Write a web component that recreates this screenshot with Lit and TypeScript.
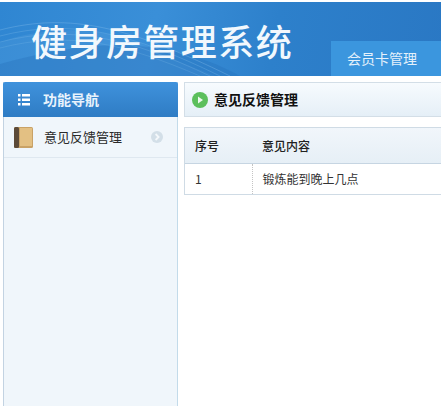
import { LitElement, html, css } from "lit";
import { customElement } from "lit/decorators.js";

@customElement("app-root")
export class AppRoot extends LitElement {
  static styles = css`
    :host { display: block; width: 441px; height: 406px; overflow: hidden; background: #fff;
      font-family: "Noto Sans CJK SC", "Liberation Sans", sans-serif; font-size: 13px; color: #222; }
    .header { margin-top: 2px; height: 74px; position: relative; overflow: hidden;
      background: linear-gradient(100deg, #2f86d2 0%, #3a8fd8 35%, #2d80cb 62%, #2a78c4 100%);
      display: flex; justify-content: space-between; align-items: flex-end; }
    .waves { position: absolute; left: 0; top: 0; width: 441px; height: 74px; }
    .title { position: relative; margin: 0 0 7px 31px; color: #f2f8fd; font-size: 36px; line-height: 58px;
      letter-spacing: 1.45px; font-weight: 500; white-space: nowrap; }
    .tab { position: relative; width: 110px; height: 35px; box-sizing: border-box; padding: 0 0 0 16px; background: #3b96de;
      color: #e4f1fb; font-size: 14px; line-height: 35px; white-space: nowrap; }
    .body { display: flex; gap: 6px; margin: 6px 0 0 3px; height: 324px; }
    .side { width: 175px; flex: none; box-sizing: border-box; background: #f0f6fb;
      border-left: 1px solid #c3d3e2; border-right: 1px solid #c3dbea; margin: 0; }
    .side-head { margin: 0 -1px; height: 35px; border-radius: 2px 2px 0 0;
      background: linear-gradient(#3f92dc, #2f7cc4); color: #e8f3fc; font-size: 14px;
      display: flex; align-items: center; gap: 13px; padding-left: 15px; font-weight: 700; }
    .side-head span, .bar span, .label { padding-bottom: 2px; }
    .item { height: 41px; box-sizing: border-box; border-bottom: 1px solid #dfe8f0; display: flex; align-items: center;
      padding-left: 10px; color: #2a2a2a; }
    .label { margin-left: 10px; flex: 1; }
    .chev { margin-right: 14px; }
    .main { flex: 1; min-width: 0; display: flex; flex-direction: column; gap: 10px; }
    .bar { height: 35px; box-sizing: border-box; border: 1px solid #d3dee7; border-right: 0;
      background: linear-gradient(#f7fbfe, #e5eff7); display: flex; align-items: center;
      gap: 6px; padding-left: 7px; font-weight: 700; font-size: 14px; color: #111; }
    table { width: 100%; border-collapse: collapse; table-layout: fixed; }
    .tbl { border: 1px solid #cfdbe5; border-right: 0; }
    th { height: 35px; padding: 0 0 0 10px; box-sizing: border-box; font-size: 12px; font-weight: 500; text-align: left; color: #222;
      background: linear-gradient(#f1f6fb, #e6eff6); border-bottom: 1px solid #c6d5e2; }
    td { height: 31px; padding: 0 0 0 10px; box-sizing: border-box; font-size: 12px; color: #333; }
    td + td { border-left: 1px dotted #c4c4c4; }
    .c1 { width: 67px; }
  `;

  render() {
    return html`
      <div class="header">
        <svg class="waves" viewBox="0 0 441 74" fill="none">
          <path d="M0 40 C60 20 120 25 180 60 L215 74 L0 74Z" fill="#5ba3e0" opacity=".28"/>
          <path d="M0 62 C80 40 160 30 240 74 L0 74Z" fill="#2470bb" opacity=".35"/>
          <path d="M0 28 C70 10 130 25 230 74" stroke="#8cc3ee" stroke-width=".6" opacity=".55"/>
          <path d="M0 34 C70 16 130 30 220 74" stroke="#8cc3ee" stroke-width=".6" opacity=".45"/>
          <path d="M0 40 C70 22 130 36 210 74" stroke="#8cc3ee" stroke-width=".6" opacity=".4"/>
          <path d="M0 46 C70 28 125 42 200 74" stroke="#8cc3ee" stroke-width=".6" opacity=".35"/>
        </svg>
        <div class="title">健身房管理系统</div>
        <div class="tab">会员卡管理</div>
      </div>
      <div class="body">
        <div class="side">
          <div class="side-head">
            <svg width="12" height="12" viewBox="0 0 12 12" fill="#fff">
              <rect x="0" y="0" width="2.5" height="2.5"/><rect x="4" y="0" width="8" height="2.5"/>
              <rect x="0" y="4.5" width="2.5" height="2.5"/><rect x="4" y="4.5" width="8" height="2.5"/>
              <rect x="0" y="9" width="2.5" height="2.5"/><rect x="4" y="9" width="8" height="2.5"/>
            </svg>
            <span>功能导航</span>
          </div>
          <div class="item">
            <svg width="20" height="21" viewBox="0 0 20 21">
              <rect x="0" y="0" width="19" height="21" rx="1.5" fill="#c9a266"/>
              <rect x="0" y="0" width="5" height="21" rx="1.5" fill="#5c4a38"/>
              <rect x="6" y="1" width="12" height="18" fill="#e3c083"/>
            </svg>
            <span class="label">意见反馈管理</span>
            <svg class="chev" width="12" height="12" viewBox="0 0 12 12">
              <circle cx="6" cy="6" r="6" fill="#d3dfe8"/>
              <path d="M4.6 3 L7.6 6 L4.6 9" fill="none" stroke="#f4f8fb" stroke-width="1.8"/>
            </svg>
          </div>
        </div>
        <div class="main">
          <div class="bar">
            <svg width="16" height="16" viewBox="0 0 16 16">
              <circle cx="8" cy="8" r="8" fill="#5cbf5c"/>
              <path d="M6 4.5 L11 8 L6 11.5Z" fill="#eef9ee"/>
            </svg>
            <span>意见反馈管理</span>
          </div>
          <div class="tbl">
            <table>
              <colgroup><col class="c1" /><col /></colgroup>
              <tr><th>序号</th><th>意见内容</th></tr>
              <tr><td>1</td><td>锻炼能到晚上几点</td></tr>
            </table>
          </div>
        </div>
      </div>
    `;
  }
}
